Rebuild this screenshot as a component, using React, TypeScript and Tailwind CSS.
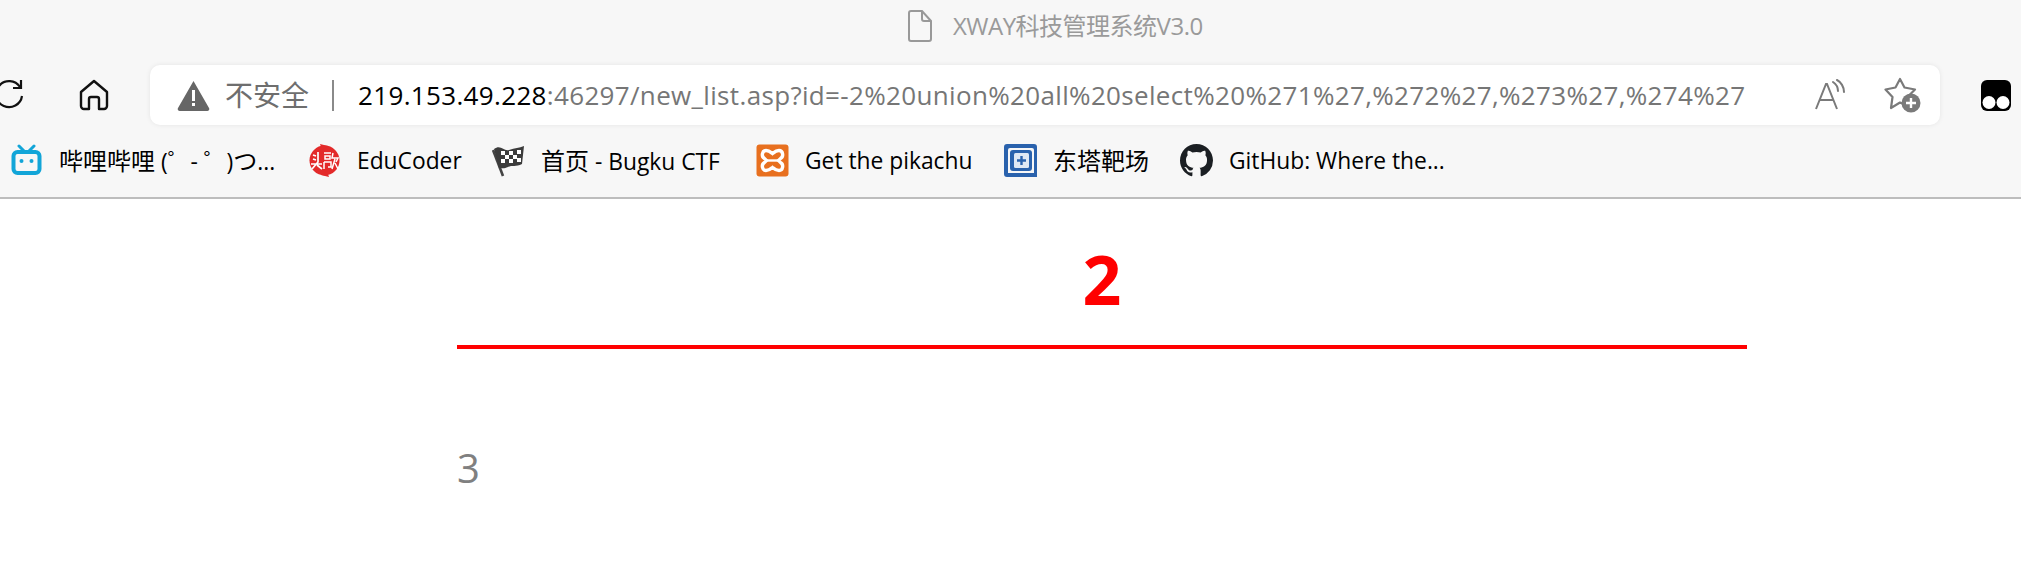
import React from "react";

const sans = "font-['Open_Sans','Noto_Sans_CJK_SC',sans-serif]";

function Bookmark({ icon, children, width }: { icon: React.ReactNode; children: React.ReactNode; width: string }) {
  return (
    <div className={`flex items-center gap-[16px] shrink-0 ${width}`}>
      <span className="w-[33px] h-[33px] shrink-0">{icon}</span>
      <span className="text-[22.8px] leading-[32px] pt-[2px] text-black whitespace-pre">{children}</span>
    </div>
  );
}

const Cjk = ({ children }: { children: React.ReactNode }) => <span className="text-[24px]">{children}</span>;

const Bili = (
  <svg viewBox="0 0 33 33" className="w-full h-full">
    <path d="M9 2l5 5M24 2l-5 5" stroke="#12a5d8" strokeWidth="3" strokeLinecap="round" />
    <rect x="3.5" y="8" width="26" height="21" rx="4" fill="none" stroke="#12a5d8" strokeWidth="4" />
    <circle cx="11.5" cy="17" r="2" fill="#12a5d8" />
    <circle cx="21.5" cy="17" r="2" fill="#12a5d8" />
  </svg>
);
const Toutiao = (
  <svg viewBox="0 0 33 33" className="w-full h-full">
    <circle cx="16.5" cy="16.5" r="15" fill="#e32a2a" />
    <path d="M12 0l8 2-6 4zM21 33l-8-2 6-4z" fill="#e32a2a" />
    <path d="M5 11l3 1M5 15l3 1M3 20h11M10 8v10l-6 7M9 21l5 4" stroke="#fff" strokeWidth="1.7" fill="none" />
    <path d="M16 9h7M17 12h5v3h-5zM16 18v7M16 18h7v5h-3M25 9l-1 5h6l-2 4M27 15l-3 10M27 19l3 6" stroke="#fff" strokeWidth="1.5" fill="none" />
  </svg>
);
const Flag = (
  <svg viewBox="0 0 33 33" className="w-full h-full">
    <path d="M1 6l10 26" stroke="#444" strokeWidth="2.6" />
    <path d="M2 5c7-5 10 3 15 1 6-2 10-2 15-4l-2 18c-6 3-10 1-14 3-4 2-6 1-9 1z" fill="#3c3c3c" />
    <g fill="#fff">
      <rect x="9" y="7" width="4" height="4" /><rect x="17" y="7" width="4" height="4" /><rect x="25" y="6" width="4" height="4" />
      <rect x="13" y="11" width="4" height="4" /><rect x="21" y="11" width="4" height="4" />
      <rect x="9" y="15" width="4" height="4" /><rect x="17" y="15" width="4" height="4" /><rect x="25" y="14" width="4" height="4" />
    </g>
  </svg>
);
const Xampp = (
  <svg viewBox="0 0 33 33" className="w-full h-full">
    <rect x="0.5" y="0.5" width="32" height="32" rx="3" fill="#e8701f" />
    <path d="M10 6.500c3 0 4 1 6.500 3 2.500-2 3.500-3 6.500-3 4 0 5 6 1.500 8l-2 2 2 2c3.500 2 2.500 8-1.500 8-3 0-4-1-6.500-3-2.500 2-3.500 3-6.500 3-4 0-5-6-1.500-8l2-2-2-2C5 12.500 6 6.500 10 6.500z" fill="none" stroke="#fff" strokeWidth="3.400" />
    <path d="M11 16.500h11" stroke="#fff" strokeWidth="2.400" />
  </svg>
);
const Dongta = (
  <svg viewBox="0 0 33 33" className="w-full h-full">
    <path d="M3 0h27a3 3 0 0 1 3 3v26h-3V6a2 2 0 0 0-2-2H6a2 2 0 0 0-2 2v23h29v4H3a3 3 0 0 1-3-3V3a3 3 0 0 1 3-3z" fill="#2a62ad" />
    <rect x="6" y="6" width="22" height="21" rx="3" fill="#2a62ad" />
    <rect x="10" y="9" width="15" height="15" rx="1.500" fill="#dfe8f4" />
    <path d="M17.500 12v9M13 16.500h9" stroke="#2a62ad" strokeWidth="2.400" />
  </svg>
);
const GitHub = (
  <svg viewBox="0 0 16 16" className="w-full h-full" fill="#1b1f23">
    <path d="M8 0C3.580 0 0 3.580 0 8c0 3.540 2.290 6.530 5.470 7.590.4.070.55-.17.55-.38 0-.19-.01-.82-.01-1.490-2.010.37-2.530-.49-2.690-.94-.09-.23-.48-.94-.82-1.130-.28-.15-.68-.52-.01-.53.630-.01 1.080.58 1.230.82.720 1.210 1.870.87 2.330.66.070-.52.280-.87.510-1.070-1.780-.2-3.640-.89-3.640-3.950 0-.87.310-1.590.820-2.150-.08-.2-.36-1.020.08-2.120 0 0 .67-.21 2.200.82.640-.18 1.320-.27 2-.27s1.360.09 2 .27c1.530-1.040 2.200-.82 2.200-.82.440 1.100.160 1.920.08 2.120.51.560.82 1.270.82 2.150 0 3.070-1.870 3.750-3.650 3.950.29.250.54.730.54 1.480 0 1.070-.01 1.930-.01 2.200 0 .21.150.46.550.38A8.010 8.010 0 0 0 16 8c0-4.420-3.580-8-8-8z" />
  </svg>
);

export default function App() {
  return (
    <div className={`w-[2021px] h-[564px] overflow-hidden bg-white flex flex-col ${sans}`}>
      <div className="h-[199px] bg-[#f7f7f7] border-b-2 border-[#bdbdbd] flex flex-col shrink-0">
        {/* title */}
        <div className="h-[65px] flex items-center pl-[908px] gap-[21px] pb-[14px]">
          <svg width="24" height="32" viewBox="0 0 24 32" fill="none" stroke="#999" strokeWidth="2">
            <path d="M3 1h11l9 10v18a2 2 0 0 1-2 2H3a2 2 0 0 1-2-2V3a2 2 0 0 1 2-2zM14 1v8a2 2 0 0 0 2 2h7" />
          </svg>
          <span className="text-[24px] leading-[32px] text-[#9a9a9a] tracking-[-0.5px] whitespace-nowrap">XWAY科技管理系统V3.0</span>
        </div>
        {/* toolbar */}
        <div className="h-[60px] flex items-center">
          <div className="w-[150px] h-full flex items-center shrink-0 overflow-hidden">
            <svg width="32" height="34" viewBox="0 0 32 34" fill="none" stroke="#111" strokeWidth="2.200" className="ml-[-8px] shrink-0">
              <path d="M28 9a13 13 0 1 0 2 9M29 2v8h-8" />
            </svg>
            <svg width="30" height="32" viewBox="0 0 30 32" fill="none" stroke="#111" strokeWidth="2.400" strokeLinejoin="round" className="ml-[55px] shrink-0">
              <path d="M2 13 15 2l13 11v14a3 3 0 0 1-3 3h-5V20a2 2 0 0 0-2-2h-6a2 2 0 0 0-2 2v10H5a3 3 0 0 1-3-3z" />
            </svg>
          </div>
          <div className="w-[1790px] h-full bg-white rounded-[10px] shadow-[0_0_5px_rgba(0,0,0,0.08)] flex items-center shrink-0">
            <svg width="33" height="31" viewBox="0 0 33 31" className="ml-[27px] shrink-0">
              <path d="M16.500 1 32 28a2 2 0 0 1-1.700 3H2.700A2 2 0 0 1 1 28z" fill="#666" />
              <rect x="15" y="10" width="3" height="11" fill="#fff" />
              <rect x="15" y="23" width="3" height="3" fill="#fff" />
            </svg>
            <span className="ml-[15px] text-[28px] leading-[36px] text-[#6e6e6e] whitespace-nowrap">不安全</span>
            <span className="ml-[23px] w-[2px] h-[31px] bg-[#8a8a8a] shrink-0" />
            <span className="ml-[24px] text-[26px] leading-[36px] whitespace-nowrap text-[#767676] tracking-[0.34px] w-[1392px] overflow-hidden">
              <span className="text-black">219.153.49.228</span>:46297/new_list.asp?id=-2%20union%20all%20select%20%271%27,%272%27,%273%27,%274%27
            </span>
            <svg width="32" height="32" viewBox="0 0 32 32" fill="none" stroke="#7a7a7a" strokeWidth="2" className="ml-[65px] shrink-0">
              <path d="M1 30 11 5h1l10 25M5 21h14" />
              <path d="M18 3c3 2 5 5 5 9M22 1c4 2 7 7 7 12" strokeLinecap="round" />
            </svg>
            <svg width="38" height="36" viewBox="0 0 38 36" className="ml-[37px] shrink-0">
              <path d="M16 2l4.500 8.500 10.500 2-7 7 1.500 10.500-9.500-4.500-9 5.500 1.500-11-7-7.500 10-2z" fill="none" stroke="#7a7a7a" strokeWidth="2.200" strokeLinejoin="round" />
              <circle cx="27" cy="26" r="9.500" fill="#7a7a7a" />
              <path d="M27 21v10M22 26h10" stroke="#fff" strokeWidth="2.400" />
            </svg>
          </div>
          <svg width="30" height="31" viewBox="0 0 30 31" className="ml-[41px] shrink-0">
            <rect width="30" height="31" rx="6" fill="#000" />
            <circle cx="8" cy="22.500" r="6.500" fill="#fff" />
            <circle cx="22" cy="22.500" r="6.500" fill="#fff" />
          </svg>
        </div>
        {/* bookmarks */}
        <div className="flex-1 flex items-center pl-[10px] pb-[2px]">
          <Bookmark icon={Bili} width="w-[298px]"><Cjk>哔哩哔哩</Cjk> (゜- ゜)<Cjk>つ</Cjk>...</Bookmark>
          <Bookmark icon={Toutiao} width="w-[184px]">EduCoder</Bookmark>
          <Bookmark icon={Flag} width="w-[264px]"><Cjk>首页</Cjk> - Bugku CTF</Bookmark>
          <Bookmark icon={Xampp} width="w-[248px]">Get the pikachu</Bookmark>
          <Bookmark icon={Dongta} width="w-[176px]"><Cjk>东塔靶场</Cjk></Bookmark>
          <Bookmark icon={GitHub} width="w-[270px]">GitHub: Where the...</Bookmark>
        </div>
      </div>
      <main className="w-[1290px] ml-[457px] flex flex-col">
        <h1 className="text-center text-[68px] leading-[96px] font-bold text-[#ff0000] mt-[32px]">2</h1>
        <div className="h-[4px] bg-[#ff0000] mt-[18px]" />
        <p className="text-[40px] leading-[58px] text-[#808080] mt-[90px]">3</p>
      </main>
    </div>
  );
}
